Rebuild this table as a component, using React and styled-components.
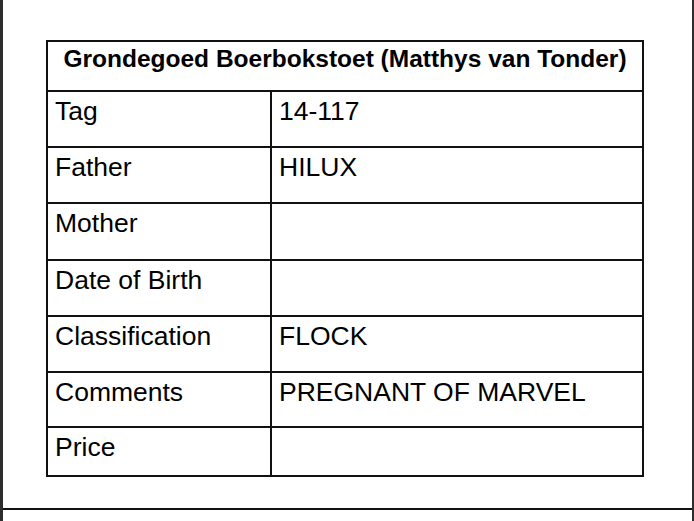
import { Fragment } from "react";
import styled, { createGlobalStyle } from "styled-components";

const Global = createGlobalStyle`
  html, body { margin: 0; padding: 0; background: #ffffff; }
  body { font-family: "Liberation Sans", Arial, sans-serif; color: #000; }
`;

const Frame = styled.div`
  width: 694px;
  height: 521px;
  box-sizing: border-box;
  border-left: 3px solid #2d2d2d;
  border-right: 2px solid #2d2d2d;
  overflow: hidden;
`;

const Sheet = styled.div`
  height: 510px;
  box-sizing: border-box;
  border-bottom: 2px solid #111;
  padding: 40px 0 0 43px;
`;

const Grid = styled.div`
  display: grid;
  grid-template-columns: 224px 372px;
  width: 598px;
  box-sizing: border-box;
  border-top: 2px solid #111;
  border-left: 2px solid #111;
`;

const Cell = styled.div`
  box-sizing: border-box;
  height: ${(p) => p.$h}px;
  border-right: 2px solid #111;
  border-bottom: 2px solid #111;
  padding: 4px 0 0 7px;
  font-size: 26.5px;
  line-height: 1.15;
  white-space: nowrap;
`;

const Header = styled(Cell)`
  grid-column: 1 / 3;
  padding: 3px 0 0 0;
  text-align: center;
  font-size: 24.5px;
  font-weight: 700;
`;

const rows = [
  { label: "Tag", value: "14-117", h: 56 },
  { label: "Father", value: "HILUX", h: 56 },
  { label: "Mother", value: "", h: 57 },
  { label: "Date of Birth", value: "", h: 56 },
  { label: "Classification", value: "FLOCK", h: 56 },
  { label: "Comments", value: "PREGNANT OF MARVEL", h: 55 },
  { label: "Price", value: "", h: 49 },
];

export default function App() {
  return (
    <>
      <Global />
      <Frame>
        <Sheet>
          <Grid>
            <Header $h={50}>Grondegoed Boerbokstoet (Matthys van Tonder)</Header>
            {rows.map((r) => (
              <Fragment key={r.label}>
                <Cell $h={r.h}>{r.label}</Cell>
                <Cell $h={r.h}>{r.value}</Cell>
              </Fragment>
            ))}
          </Grid>
        </Sheet>
      </Frame>
    </>
  );
}
